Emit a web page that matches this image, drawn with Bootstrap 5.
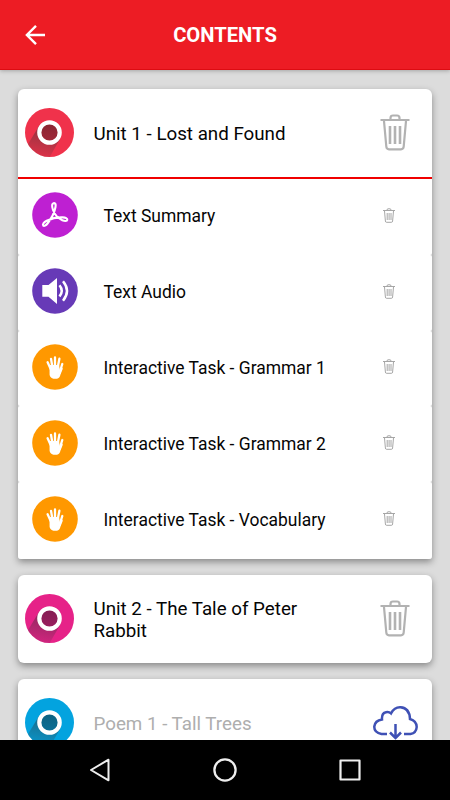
<!DOCTYPE html>
<html lang="en">
<head>
<meta charset="utf-8">
<meta name="viewport" content="width=device-width, initial-scale=1">
<title>Contents</title>
<link href="https://cdn.jsdelivr.net/npm/bootstrap@5.3.0/dist/css/bootstrap.min.css" rel="stylesheet">
<style>
body{font-family:Roboto,"Liberation Sans",sans-serif;background:#dcdcdc;color:#050505}
svg{display:block;flex:none}
.app-bar{height:70px;background:#ed1c24;border-bottom:1px solid #dd0c12;box-shadow:0 1px 4px rgba(0,0,0,.25);padding-left:25px}
.app-title{font-size:20.2px;font-weight:700;line-height:24px;padding:1px 45px 0 0}
.unit{border-radius:6px;box-shadow:0 3px 7px rgba(0,0,0,.38)}
.unit-open{border-radius:6px 6px 3px 3px}
.unit-row{height:88px;padding:0 22px .6px 7px}
.unit-row-cloud{padding-right:14px}
.unit-name{font-size:18.75px;line-height:22px;margin-left:19.5px;padding:2px 60px 0 0}
.locked{color:#aeaeae}
.tasks{border-top:2px solid #f00000;background:#ccc;border-radius:0 0 3px 3px}
.task{height:75.8px;padding:0 37px 3px 13.5px;border-radius:2px}
.task:first-child{border-radius:0 0 2px 2px}
.task:last-child{height:76.8px;padding-bottom:4px;border-radius:2px 2px 3px 3px}
.task-name{font-size:17.45px;line-height:22px;margin-left:26px;padding-top:2px}
.stack{padding:19px 18px 0;gap:16px}
.system-bar{height:60px;padding:0 88.5px}
</style>
<script src="https://cdn.jsdelivr.net/npm/bootstrap@5.3.0/dist/js/bootstrap.bundle.min.js"></script>
</head>
<body class="vh-100 d-flex flex-column overflow-hidden">
<svg width="0" height="0" class="position-absolute">
<defs>
<clipPath id="disc"><circle cx="24.5" cy="24.5" r="24.5"/></clipPath>
<linearGradient id="shade" gradientUnits="userSpaceOnUse" x1="20" y1="20" x2="14" y2="49"><stop offset="0" stop-color="#333" stop-opacity=".5"/><stop offset="1" stop-color="#333" stop-opacity=".1"/></linearGradient>
<linearGradient id="hole" x1="0" y1="0" x2="0" y2="1"><stop offset="0" stop-color="#181818" stop-opacity=".48"/><stop offset="1" stop-color="#181818" stop-opacity=".36"/></linearGradient>
</defs>
<symbol id="ring" viewBox="0 0 49 49"><g clip-path="url(#disc)"><path fill="currentColor" d="M0 0h49v49H0z"/><path d="M14 18 0 41v11h23L35 31z" fill="url(#shade)"/><circle cx="24.500" cy="24.500" r="10" fill="currentColor"/><circle cx="24.500" cy="24.500" r="10" fill="url(#hole)"/><circle cx="24.500" cy="24.500" r="10.200" fill="none" stroke="#fff" stroke-width="4.200"/></g></symbol>
<symbol id="trash" viewBox="0 0 30 37"><g fill="none" stroke="#b2b2b2" stroke-width="2.200"><path d="M.5 6h29M10.500 5.500V4q0-2.500 2.500-2.500h4Q19.500 1.500 19.500 4v1.500M4 7l2.300 25.500q.2 2.800 2.700 2.800h12q2.500 0 2.700-2.800L26 7"/><path d="M10 12v18M15 12v18M20 12v18" stroke-width="2.600"/></g></symbol>
<symbol id="trash-sm" viewBox="0 0 12 15"><g fill="none" stroke="#9c9c9c" stroke-width=".9"><path d="M0 2.500h12M4 2.200Q4 .8 5 .8h2q1 0 1 1.400M1.500 3l.9 10q.1 1.300 1.100 1.300h5q1 0 1.100-1.300l.9-10M4.200 5v7M6.100 5v7M8 5v7"/></g></symbol>
<symbol id="hand" viewBox="0 0 46 46"><circle cx="23" cy="23" r="22.800" fill="#ff9800"/><g stroke="#fff" fill="none" stroke-width="2.300" stroke-linecap="round"><path d="M18.700 25 15.600 18.300M20.400 23 19 14.800M23 23V13.500M25.800 23 27.400 14.700M27.500 29 30.300 20"/></g><path d="M17.500 21 27 21 28 26.500 29.500 23.500Q31 23 30.700 25L28.500 30.500Q27.600 34.300 25 34.700H21.500Q18.500 34.300 17.600 31Z" fill="#fff"/></symbol>
</svg>

<header class="app-bar d-flex align-items-center text-white flex-shrink-0">
<svg width="20" height="20" viewBox="0 0 20 20" fill="none" stroke="#fff" stroke-width="2.400"><path d="M20 10H2M11 .9 1.900 10l9.100 9.100"/></svg>
<h1 class="app-title flex-grow-1 text-center m-0">CONTENTS</h1>
</header>

<main class="stack flex-grow-1 overflow-hidden d-flex flex-column">
<section class="unit unit-open bg-white flex-shrink-0">
<div class="unit-row d-flex align-items-center">
<svg width="49" height="49" color="#f0324b"><use href="#ring"/></svg>
<div class="unit-name flex-grow-1">Unit 1 - Lost and Found</div>
<svg width="30" height="37"><use href="#trash"/></svg>
</div>
<div class="tasks">
<div class="task bg-white d-flex align-items-center">
<svg width="46" height="46" viewBox="0 0 46 46"><circle cx="23" cy="23" r="22.800" fill="#be20d2"/><path fill="none" stroke="#fff" stroke-width="2.100" stroke-linejoin="round" d="M21.500 11.200c2-.6 2.500 1.500 2 3.800-.5 2.800-3.400 10.500-8 16.500-1.500 2-3.500 3-4.300 2-1-1.500.8-3.500 3.500-4.800 5-2.300 11-3.600 16-3.300 3 .2 4.800 1 4.600 2.400-.3 1.500-2.600 1.400-5 .4-4.200-1.800-7.600-5.700-9.300-10.200-1-3-1.300-6.200.5-6.800Z"/></svg>
<div class="task-name flex-grow-1">Text Summary</div>
<svg width="12" height="15"><use href="#trash-sm"/></svg>
</div>
<div class="task bg-white d-flex align-items-center">
<svg width="46" height="46" viewBox="0 0 46 46"><circle cx="23" cy="23" r="22.800" fill="#673ab7"/><path fill="#fff" d="M10.300 17h6.200L25 10v26l-8.500-7.200h-6.200z"/><path fill="none" stroke="#fff" stroke-width="2.500" d="M27.500 17.300q4.500 5.500 0 11.300M31 13.200q8 9.500 0 19.500"/></svg>
<div class="task-name flex-grow-1">Text Audio</div>
<svg width="12" height="15"><use href="#trash-sm"/></svg>
</div>
<div class="task bg-white d-flex align-items-center">
<svg width="46" height="46"><use href="#hand"/></svg>
<div class="task-name flex-grow-1">Interactive Task - Grammar 1</div>
<svg width="12" height="15"><use href="#trash-sm"/></svg>
</div>
<div class="task bg-white d-flex align-items-center">
<svg width="46" height="46"><use href="#hand"/></svg>
<div class="task-name flex-grow-1">Interactive Task - Grammar 2</div>
<svg width="12" height="15"><use href="#trash-sm"/></svg>
</div>
<div class="task bg-white d-flex align-items-center">
<svg width="46" height="46"><use href="#hand"/></svg>
<div class="task-name flex-grow-1">Interactive Task - Vocabulary</div>
<svg width="12" height="15"><use href="#trash-sm"/></svg>
</div>
</div>
</section>

<section class="unit bg-white flex-shrink-0">
<div class="unit-row d-flex align-items-center">
<svg width="49" height="49" color="#e62288"><use href="#ring"/></svg>
<div class="unit-name flex-grow-1">Unit 2 - The Tale of Peter Rabbit</div>
<svg width="30" height="37"><use href="#trash"/></svg>
</div>
</section>

<section class="unit bg-white flex-shrink-0">
<div class="unit-row unit-row-cloud d-flex align-items-center">
<svg width="49" height="49" color="#03a3df"><use href="#ring"/></svg>
<div class="unit-name locked flex-grow-1 pe-0">Poem 1 - Tall Trees</div>
<svg width="45" height="34" viewBox="0 0 45 34" fill="none" stroke="#3f51b5" stroke-width="2.500"><path d="M14 28H8.500Q1 26.500 1.300 20.500 2 14.500 9 13.500 8.500 7 13 6.200q3-.6 5 1.200Q21.500 1 27.500 1.300 36.500 2 37 13q6.600 2 6.700 8-.4 6-6.200 7H31M22.500 18v14M17 26.500l5.500 5.500 5.500-5.500"/></svg>
</div>
</section>
</main>

<nav class="system-bar bg-black d-flex justify-content-between align-items-center flex-shrink-0">
<svg width="24" height="24" viewBox="0 0 24 24" fill="none" stroke="#eee" stroke-width="2" stroke-linejoin="round"><path d="M2 12 19.500 1.700v20.600z"/></svg>
<svg width="24" height="24" viewBox="0 0 24 24" fill="none" stroke="#eee" stroke-width="2.300"><circle cx="12" cy="12" r="10.600"/></svg>
<svg width="24" height="24" viewBox="0 0 24 24" fill="none" stroke="#eee" stroke-width="2.200" stroke-linejoin="round"><path d="M2.500 2.500h19v19h-19z"/></svg>
</nav>
</body>
</html>
